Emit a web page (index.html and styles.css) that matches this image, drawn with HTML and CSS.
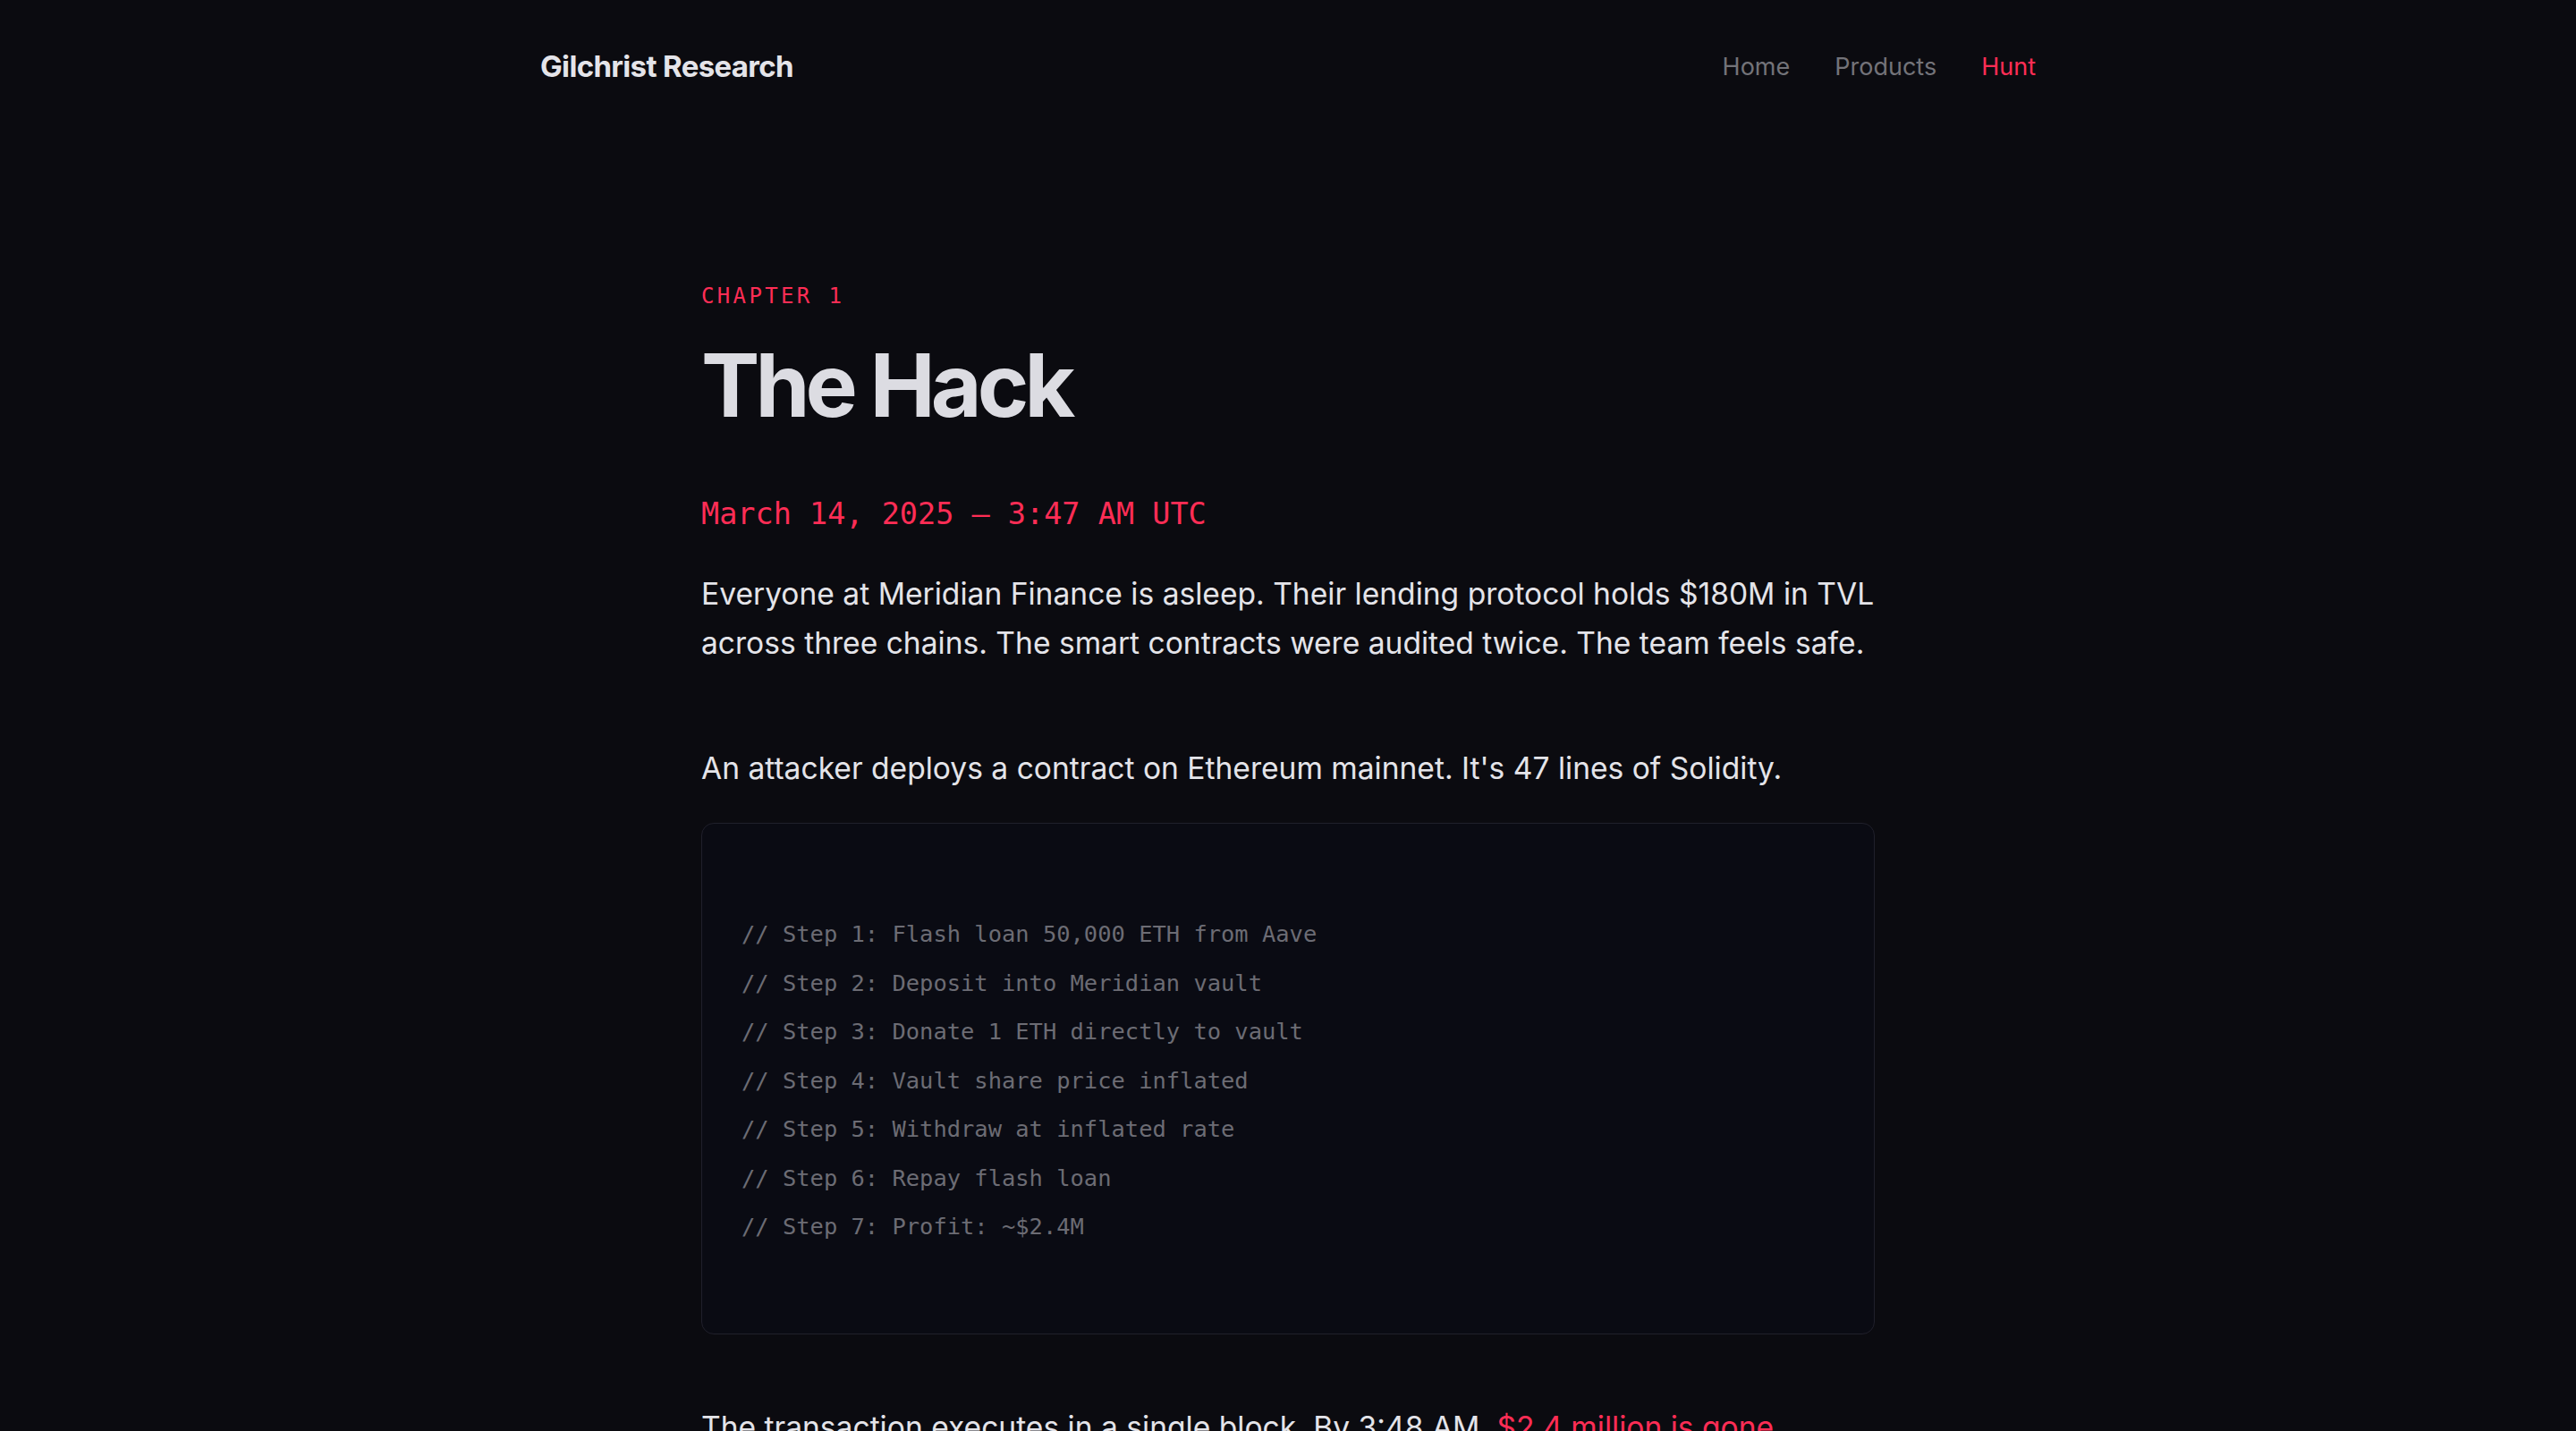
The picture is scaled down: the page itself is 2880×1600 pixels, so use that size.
FILE: index.html
```html
<!DOCTYPE html>
<html lang="en">
<head>
<meta charset="utf-8">
<title>The Hack — Gilchrist Research</title>
<link rel="stylesheet" href="styles.css">
</head>
<body>
<header class="nav">
  <a class="logo" href="#">Gilchrist Research</a>
  <nav class="links">
    <a href="#">Home</a>
    <a href="#">Products</a>
    <a href="#" class="active">Hunt</a>
  </nav>
</header>
<main class="article">
  <div class="chapter">CHAPTER 1</div>
  <h1 class="title">The Hack</h1>
  <div class="timestamp">March 14, 2025 — 3:47 AM UTC</div>
  <p class="p1">Everyone at Meridian Finance is asleep. Their lending protocol holds $180M in TVL across three chains. The smart contracts were audited twice. The team feels safe.</p>
  <p class="p2">An attacker deploys a contract on Ethereum mainnet. It's 47 lines of Solidity.</p>
  <pre class="code">// Step 1: Flash loan 50,000 ETH from Aave
// Step 2: Deposit into Meridian vault
// Step 3: Donate 1 ETH directly to vault
// Step 4: Vault share price inflated
// Step 5: Withdraw at inflated rate
// Step 6: Repay flash loan
// Step 7: Profit: ~$2.4M</pre>
  <p class="p3">The transaction executes in a single block. By 3:48 AM, <span class="red">$2.4 million is gone.</span></p>
</main>
</body>
</html>
```
FILE: styles.css
```css
* { box-sizing: border-box; }
html, body {
  margin: 0;
  padding: 0;
  background: #0b0b10;
  color: #e4e4e9;
  font-family: Inter, "Noto Sans", sans-serif;
}
a { text-decoration: none; color: inherit; }

.nav {
  width: 1672px;
  height: 148px;
  margin: 0 auto;
  display: flex;
  align-items: center;
  justify-content: space-between;
}
.logo {
  font-size: 33px;
  font-weight: 700;
  letter-spacing: -0.02em;
  color: #e4e4e9;
}
.links {
  display: flex;
  gap: 50px;
  font-size: 27px;
}
.links a { color: #737379; }
.links a.active { color: #ff2d55; }

.article {
  width: 1312px;
  margin: 0 auto;
  padding-top: 164px;
}
.chapter {
  font-family: "DejaVu Sans Mono", "Liberation Mono", monospace;
  font-size: 24px;
  line-height: 39px;
  letter-spacing: 0.14em;
  color: #ff2d55;
}
.title {
  margin: 25px 0 0;
  font-size: 98px;
  line-height: 110px;
  font-weight: 700;
  letter-spacing: -0.05em;
  color: #dcdce2;
}
.timestamp {
  margin-top: 64px;
  font-family: "DejaVu Sans Mono", "Liberation Mono", monospace;
  font-size: 33.5px;
  line-height: 50px;
  color: #ff2d55;
}
.p1, .p2, .p3 {
  font-size: 33.6px;
  line-height: 55px;
  margin: 0;
  color: #e4e4e9;
}
.p1 { margin-top: 36px; }
.p2 { margin-top: 85px; }
.code {
  margin: 34px 0 0;
  border: 1px solid #20202b;
  border-radius: 14px;
  background: #0a0b13;
  padding: 96px 44px 92px;
  font-family: "DejaVu Sans Mono", "Liberation Mono", monospace;
  font-size: 25.45px;
  line-height: 54.5px;
  color: #6c6c74;
}
.p3 { margin-top: 76px; }
.red { color: #ff2d55; }
```
